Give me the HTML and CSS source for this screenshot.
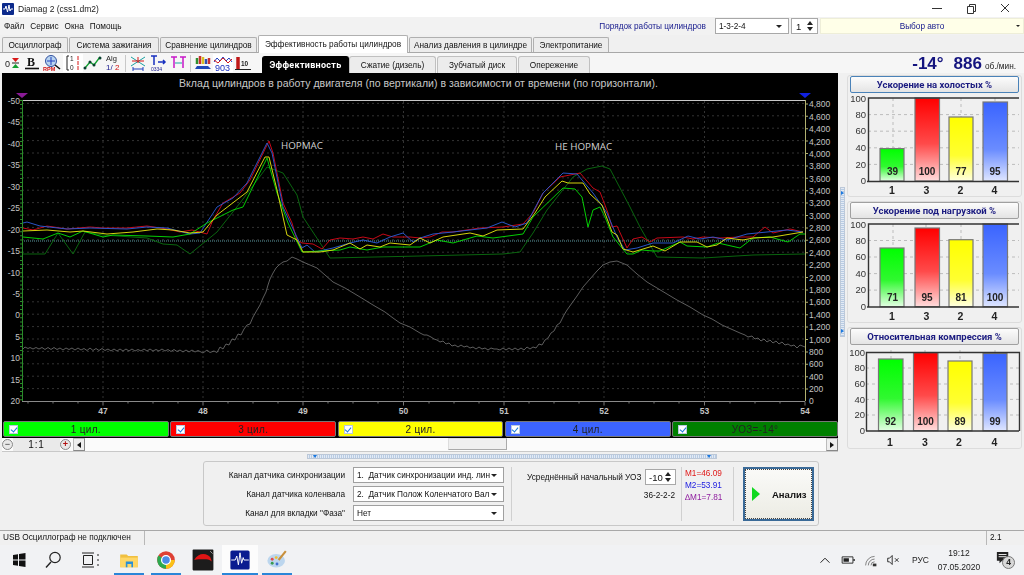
FILE: index.html
```html
<!DOCTYPE html>
<html lang="ru">
<head>
<meta charset="utf-8">
<title>Diamag 2 (css1.dm2)</title>
<link rel="stylesheet" href="styles.css">
</head>
<body>
<svg class="defs" width="0" height="0" aria-hidden="true">
  <defs>
    <linearGradient id="gGreen" x1="0" y1="0" x2="0" y2="1"><stop offset="0" stop-color="#00ff00"/><stop offset=".55" stop-color="#30f830"/><stop offset="1" stop-color="#e4ffe4"/></linearGradient>
    <linearGradient id="gRed" x1="0" y1="0" x2="0" y2="1"><stop offset="0" stop-color="#ff0000"/><stop offset=".55" stop-color="#ff4a4a"/><stop offset="1" stop-color="#ffdcdc"/></linearGradient>
    <linearGradient id="gYellow" x1="0" y1="0" x2="0" y2="1"><stop offset="0" stop-color="#ffff00"/><stop offset=".6" stop-color="#ffff30"/><stop offset="1" stop-color="#ffffe0"/></linearGradient>
    <linearGradient id="gBlue" x1="0" y1="0" x2="0" y2="1"><stop offset="0" stop-color="#3a64ff"/><stop offset=".6" stop-color="#6a8cff"/><stop offset="1" stop-color="#dfe6ff"/></linearGradient>
  </defs>
</svg>

<header class="titlebar">
  <svg class="appicon" viewBox="0 0 12 12"><rect width="12" height="12" rx="1" fill="#0c2a8c"/><path d="M1 6h2l1-3 1.500 6 1.500-7 1 6 1-2h2" fill="none" stroke="#fff" stroke-width="1"/></svg>
  <span class="title-text">Diamag 2 (css1.dm2)</span>
  <div class="winbtns">
    <svg class="winbtn" viewBox="0 0 34 17"><path d="M12 8.500h10" stroke="#333" fill="none"/></svg>
    <svg class="winbtn" viewBox="0 0 34 17"><path d="M13.500 6.500h6v7h-6zM15.500 6.500v-2h6v7h-2" stroke="#333" fill="none"/></svg>
    <svg class="winbtn" viewBox="0 0 34 17"><path d="M13 4l8 8M21 4l-8 8" stroke="#333" fill="none"/></svg>
  </div>
</header>

<nav class="menubar">
  <span class="menu-item">Файл</span><span class="menu-item">Сервис</span><span class="menu-item">Окна</span><span class="menu-item">Помощь</span>
  <span class="order-label">Порядок работы цилиндров</span>
  <span class="combo combo-order">1-3-2-4<i class="caret"></i></span>
  <span class="spin spin-top">1<i class="spin-arrows"></i></span>
  <span class="combo combo-auto"><b>Выбор авто</b><i class="caret caret-small"></i></span>
</nav>

<div class="tabs">
  <span class="tab tab-w1">Осциллограф</span>
  <span class="tab tab-w2">Система зажигания</span>
  <span class="tab tab-w3">Сравнение цилиндров</span>
  <span class="tab tab-active">Эффективность работы цилиндров</span>
  <span class="tab tab-w5">Анализ давления в цилиндре</span>
  <span class="tab tab-w6">Электропитание</span>
</div>

<div class="toolbar">
  <div class="tools">
    <div class="tgroup">
      <svg class="ti" viewBox="0 0 20 18"><text class="tt9" x="3" y="13">0</text><path fill="#d81818" d="M10 4h7l-3.500 4z"/><path fill="#222" d="M10 8.500h7v1h-7z"/><path fill="#10a030" d="M10 14h7l-3.500-4z"/></svg>
      <svg class="ti" viewBox="0 0 20 18"><text class="ttb" x="5" y="12">B</text><path class="sk2" d="M3 14.500h14"/></svg>
      <svg class="ti" viewBox="0 0 20 18"><circle class="blue-ring" cx="9" cy="7" r="5.500"/><path class="sk2" d="M13 11l5 4"/><path class="sb" d="M5 7h8M9 3v8"/><text class="tt5r" x="1" y="17">RPM</text></svg>
    </div>
    <div class="tgroup tgroup-mid">
      <svg class="ti ti-on" viewBox="0 0 20 18"><path class="sk" d="M6 2H4v14h2"/><text class="tt6" x="7" y="7">1</text><text class="tt6" x="7" y="16">0</text><path class="sr" d="M15 2v4M15 7v4M15 12v4"/></svg>
      <svg class="ti" viewBox="0 0 20 18"><path class="sg15" d="M2 14l5-6 4 3 6-8"/><circle cx="7" cy="8" r="1.500" class="dot"/><circle cx="11" cy="11" r="1.500" class="dot"/><circle cx="17" cy="4" r="1.500" class="dot"/><circle cx="2" cy="14" r="1.500" class="dot"/></svg>
      <svg class="ti" viewBox="0 0 20 18"><text class="tt7" x="3" y="7">Alg</text><text class="tt7b" x="3" y="16">1/</text><text class="tt7r" x="12" y="16">2</text></svg>
    </div>
    <i class="tsep"></i>
    <div class="tgroup tgroup-right">
      <svg class="ti" viewBox="0 0 20 18"><path class="st" d="M3 3l14 9M17 3L3 12"/><path class="sr" d="M4 7h12M10 3v6"/><path class="sb" d="M5 15h10M5 13v4M15 13v4"/></svg>
      <svg class="ti" viewBox="0 0 20 18"><path class="sb15" d="M3 2h6M6 2v9M10 8h7M15 6l2 2-2 2"/><text class="tt5k" x="3" y="17">0334</text></svg>
      <svg class="ti" viewBox="0 0 20 18"><path class="sm15" d="M3 3h6M6 3v11M12 3h6M15 3v11"/><path class="st" d="M7 9h7"/></svg>
    </div>
    <i class="tsep"></i>
    <div class="tgroup tgroup-right">
      <svg class="ti" viewBox="0 0 20 18"><path class="bar-g" d="M4 10V4"/><path class="bar-r" d="M7 10V2"/><path class="bar-y" d="M10 10V3"/><path class="bar-b" d="M13 10V5"/><path class="bar-r" d="M16 10V4"/><path class="car" d="M2 15l2-3h11l3 3z"/></svg>
      <svg class="ti ti-on" viewBox="0 0 20 18"><path class="sb" d="M1 8l3-4 3 3 3-4 3 4 3-3 3 4"/><path class="sr" d="M1 6l4 3 5-5 5 5 4-4"/><text class="tt8b" x="2" y="17">903</text></svg>
      <svg class="ti" viewBox="0 0 20 18"><path class="bar-r3" d="M5 15V3"/><path class="sk" d="M2 15.500h16"/><text class="tt7k" x="8" y="12">10</text></svg>
    </div>
  </div>
  <div class="subtabs">
    <span class="subtab subtab-active">Эффективность</span>
    <span class="subtab st-w2">Сжатие (дизель)</span>
    <span class="subtab st-w3">Зубчатый диск</span>
    <span class="subtab st-w4">Опережение</span>
  </div>
  <div class="rpm"><b>-14°</b><b class="rpm-val">886</b><small>об./мин.</small></div>
</div>

<main class="work">
  <section class="chartcol">
    <svg class="scope" viewBox="2 73 836 348">
      <text class="scope-title" x="418.500" y="86.500" text-anchor="middle">Вклад цилиндров в работу двигателя (по вертикали) в зависимости от времени (по горизонтали).</text>
      <path class="grid" d="M22 388.600H805M22 376.200H805M22 363.800H805M22 351.400H805M22 339H805M22 326.600H805M22 314.200H805M22 301.800H805M22 289.400H805M22 277H805M22 264.600H805M22 252.200H805M22 239.800H805M22 227.400H805M22 215H805M22 202.600H805M22 190.200H805M22 177.800H805M22 165.400H805M22 153H805M22 140.600H805M22 128.200H805M22 115.800H805M22 103.400H805"/>
      <path class="grid" d="M103 101V401M203 101V401M303 101V401M403.500 101V401M504 101V401M604 101V401M704.500 101V401"/>
      <path class="base" d="M22 241H805"/>
      <path class="frame-top" d="M22 100.500H805"/>
      <path class="frame-bot" d="M22 401.500H805"/>
      <path class="xminor" d="M28 401.500v2M53 401.500v2M78 401.500v2M128 401.500v2M153 401.500v2M178 401.500v2M228 401.500v2M253 401.500v2M278 401.500v2M328 401.500v2M353 401.500v2M378 401.500v2M429 401.500v2M454 401.500v2M479 401.500v2M529 401.500v2M554 401.500v2M579 401.500v2M629 401.500v2M654 401.500v2M679 401.500v2M730 401.500v2M755 401.500v2M780 401.500v2M103 401.500v4M203 401.500v4M303 401.500v4M403.500 401.500v4M504 401.500v4M604 401.500v4M704.500 401.500v4M805 401.500v4"/>
      <path class="axis-left" d="M22.500 100V401"/>
      <path class="axis-left-t" d="M21 100V401"/>
      <path class="axis-right" d="M805.500 100V401"/>
      <path class="axis-right-t" d="M807 103.400V401"/>

      <polygon class="mark-p" points="16,93 28,93 22,98"/>
      <polygon class="mark-b" points="799,93 811,93 805,98"/>

      <g class="ylab-l" text-anchor="end">
        <text x="20" y="103.500">-50</text><text x="20" y="125">-45</text><text x="20" y="146.500">-40</text><text x="20" y="168">-35</text><text x="20" y="189.500">-30</text><text x="20" y="211">-25</text><text x="20" y="232.500">-20</text><text x="20" y="254">-15</text><text x="20" y="275.500">-10</text><text x="20" y="297">-5</text><text x="20" y="318">0</text><text x="20" y="340">5</text><text x="20" y="361">10</text><text x="20" y="382.500">15</text><text x="20" y="404">20</text>
      </g>
      <g class="ylab-r">
        <text x="809" y="107">4,800</text><text x="809" y="119.500">4,600</text><text x="809" y="132">4,400</text><text x="809" y="144.500">4,200</text><text x="809" y="157">4,000</text><text x="809" y="169">3,800</text><text x="809" y="181.500">3,600</text><text x="809" y="194">3,400</text><text x="809" y="206">3,200</text><text x="809" y="218.500">3,000</text><text x="809" y="231">2,800</text><text x="809" y="243">2,600</text><text x="809" y="255.500">2,400</text><text x="809" y="268">2,200</text><text x="809" y="280.500">2,000</text><text x="809" y="293">1,800</text><text x="809" y="305">1,600</text><text x="809" y="317.500">1,400</text><text x="809" y="330">1,200</text><text x="809" y="342.500">1,000</text><text x="809" y="354.500">800</text><text x="809" y="367">600</text><text x="809" y="379.500">400</text><text x="809" y="392">200</text><text x="809" y="404">0</text>
      </g>
      <g class="xlab" text-anchor="middle">
        <text x="103" y="414">47</text><text x="203" y="414">48</text><text x="303" y="414">49</text><text x="403.500" y="414">50</text><text x="504" y="414">51</text><text x="604" y="414">52</text><text x="704.500" y="414">53</text><text x="805" y="414">54</text>
      </g>
      <text class="note" x="281" y="148.500">НОРМАС</text>
      <text class="note" x="555" y="149.500">НЕ НОРМАС</text>

      <polyline class="c-grey" points="23,349 25,347 28,348.500 30,347.500 33,349 36,347.500 39,349 42,347.500 45,349.500 48,347.500 51,349.500 54,347.500 57,349.500 60,348 63,350 66,348 69,349.500 72,348 75,350 78,348 81,350 84,348.500 87,350.500 90,348 93,350.500 96,348.500 99,350.500 102,348.500 105,350.500 108,349 111,351 114,349 117,351 120,349 123,351 126,349 129,351 132,349 135,351 138,349.500 141,351 144,349 147,351 150,349 153,351 156,349.500 159,351 162,349 165,351 168,349.500 171,351.500 174,349.500 177,351.500 180,350 183,352 186,350 189,352 192,350 195,352 198,350.500 203,353 207,350 210,352.500 214,351 217,352.500 220,347 223,349 226,344 229,345 232,339 235,340 238,334 241,335 244,329 247,325 250,324 253,317 257,310 260,305 263,298 266,292 268,285 270,279 273,273 276,268 279,265 283,262 287,261 292,257 297,259 303,262 310,265 317,268 325,275 333,282 345,288 360,297 373,305 385,312 393,318 400,323 405,325 410,327 415,330 420,333 424,335 427,335 431,337 434,339 437,340 440,342 443,341 446,344 449,343 452,346 455,345 458,347 461,345 464,347 467,346 470,348 473,347 476,349 479,347 482,349 485,348 488,350 491,348 494,349 497,349 500,350 503,348 506,350 509,348 512,350 515,348 518,350 521,348 524,350 527,347 530,349 533,347 536,348 539,344 542,345 545,340 548,338 551,333 554,331 557,325 560,323 564,315 567,310 572,303 577,296 583,287 590,279 597,271 603,265 610,262 617,261 622,263 627,265 637,274 647,282 662,291 677,300 690,307 703,315 712,319 722,325 731,329 740,333 745,335 748,337 752,336 755,339 758,338 761,341 764,339 767,342 770,340 773,343 776,341 779,344 782,342 785,345 788,344 791,346 794,345 797,348 800,345 805,347"/>
      <polyline class="c-dark" points="23,254 45,254 58,233 73,254 85,232 103,235 147,238 163,244 177,245 190,254 217,232 240,203 267,167 283,173 297,195 303,217 330,258 420,256 503,254 520,252 533,233 547,210 573,177 587,169 602,166 610,169 630,207 640,227 657,257 703,258 753,255 805,254"/>
      <polyline class="c-red" points="23,228 33,230 47,226 67,229 90,227 103,228 127,228 147,226 167,229 180,232 192,230 207,234 213,220 223,203 240,193 250,180 269,141 273,153 283,203 292,223 297,240 302,243 313,244 322,249 330,240 340,238 353,239 363,237 373,239 383,234 393,237 410,237 420,238 430,237 442,232 453,232 480,228 503,227 523,224 533,213 543,193 560,177 580,173 593,188 600,192 608,213 612,227 617,226 627,248 633,239 642,237 650,242 657,238 683,237 693,239 703,237 720,238 740,237 753,237 765,227 773,233 790,229 803,232"/>
      <polyline class="c-blue" points="23,223 27,222 40,226 67,229 90,228 127,229 147,227 167,228 190,234 200,233 217,207 233,198 247,183 267,143 272,153 283,207 295,233 302,248 307,245 315,252 333,248 350,243 363,240 377,243 390,237 403,233 413,242 420,238 433,234 453,232 487,228 502,222 515,227 527,223 543,193 563,173 577,174 593,193 607,213 617,237 625,250 637,248 653,243 673,243 688,236 700,239 713,237 727,240 747,234 767,232 787,230 803,232"/>
      <polyline class="c-green" points="23,237 43,239 58,233 70,237 83,231 103,237 113,235 147,236 173,237 190,234 207,223 233,210 243,207 267,158 277,193 288,223 302,252 320,251 340,250 350,247 367,250 383,247 400,247 420,247 437,240 453,243 477,236 493,238 523,234 533,217 563,188 575,189 582,197 588,227 593,210 600,207 605,217 613,237 627,254 633,254 642,250 653,251 660,251 680,242 687,246 707,247 718,243 740,248 753,238 770,237 788,242 800,234 805,234"/>
      <polyline class="c-yellow" points="23,231 47,230 70,232 83,231 107,234 133,232 157,229 173,230 190,233 203,232 217,215 247,192 265,157 269,157 277,190 287,235 297,240 303,252 320,252 333,250 350,243 360,249 367,245 380,247 390,243 410,245 420,238 430,243 443,237 470,233 483,236 497,230 523,229 535,213 545,197 562,181 568,183 583,183 590,194 602,205 612,232 617,235 623,249 633,252 653,246 665,251 680,242 697,242 707,247 717,245 727,238 743,240 753,238 773,237 803,232"/>
    </svg>

    <div class="legend">
      <label class="leg leg-green"><i class="chk"></i><span>1 цил.</span></label>
      <label class="leg leg-red"><i class="chk"></i><span>3 цил.</span></label>
      <label class="leg leg-yellow"><i class="chk"></i><span>2 цил.</span></label>
      <label class="leg leg-blue"><i class="chk"></i><span>4 цил.</span></label>
      <label class="leg leg-dark"><i class="chk"></i><span>УОЗ=-14°</span></label>
    </div>

    <div class="scrollstrip">
      <i class="round">−</i>
      <span class="zoomval">1:1</span>
      <i class="round round-plus">+</i>
      <i class="sbtn"><i class="arr-l"></i></i>
      <div class="track"><i class="thumb"></i></div>
      <i class="sbtn"><i class="arr-r"></i></i>
    </div>
  </section>

  <div class="rail"><div class="vsplit"><i class="blue-tip"></i><i class="blue-tip"></i></div></div>

  <aside class="side">
    <section class="group">
      <h3 class="gbtn gbtn-focus">Ускорение на холостых %</h3>
      <svg class="bars" viewBox="848 93 172 103">
        <path class="bgrid" d="M867 114.600H1018M867 131.200H1018M867 147.800H1018M867 164.400H1018M892 98V181M925 98V181M960 98V181M994 98V181"/>
        <rect class="bar" x="879" y="148.600" width="24" height="32.400" fill="url(#gGreen)"/>
        <rect class="bar" x="914" y="98" width="24.500" height="83" fill="url(#gRed)"/>
        <rect class="bar" x="948" y="117" width="24" height="64" fill="url(#gYellow)"/>
        <rect class="bar" x="982" y="102" width="24.500" height="79" fill="url(#gBlue)"/>
        <path class="paxis" d="M867.500 181V98H1018M866 181.500H1018"/>
        <g class="vals" text-anchor="middle"><text x="891.500" y="175">39</text><text x="926" y="175">100</text><text x="960" y="175">77</text><text x="994" y="175">95</text></g>
        <g class="ylabs" text-anchor="end"><text x="865" y="101.500">100</text><text x="865" y="118">80</text><text x="865" y="134">60</text><text x="865" y="151">40</text><text x="865" y="167.500">20</text><text x="865" y="184">0</text></g>
        <g class="cats" text-anchor="middle"><text x="891" y="194">1</text><text x="925.500" y="194">3</text><text x="959.500" y="194">2</text><text x="993.500" y="194">4</text></g>
      </svg>
    </section>
    <section class="group">
      <h3 class="gbtn">Ускорение под нагрузкой %</h3>
      <svg class="bars" viewBox="848 219 172 103">
        <path class="bgrid" d="M867 240.500H1018M867 257H1018M867 273.600H1018M867 290.100H1018M892 224V306.700M925 224V306.700M960 224V306.700M994 224V306.700"/>
        <rect class="bar" x="879" y="248" width="24" height="58.700" fill="url(#gGreen)"/>
        <rect class="bar" x="914" y="228" width="24.500" height="78.700" fill="url(#gRed)"/>
        <rect class="bar" x="948" y="239.700" width="24" height="67" fill="url(#gYellow)"/>
        <rect class="bar" x="982" y="224" width="24.500" height="82.700" fill="url(#gBlue)"/>
        <path class="paxis" d="M867.500 306.700V224H1018M866 307H1018"/>
        <g class="vals" text-anchor="middle"><text x="891.500" y="300.500">71</text><text x="926" y="300.500">95</text><text x="960" y="300.500">81</text><text x="994" y="300.500">100</text></g>
        <g class="ylabs" text-anchor="end"><text x="865" y="227.500">100</text><text x="865" y="243.500">80</text><text x="865" y="260">60</text><text x="865" y="276.500">40</text><text x="865" y="293">20</text><text x="865" y="309.500">0</text></g>
        <g class="cats" text-anchor="middle"><text x="891" y="319.500">1</text><text x="925.500" y="319.500">3</text><text x="959.500" y="319.500">2</text><text x="993.500" y="319.500">4</text></g>
      </svg>
    </section>
    <section class="group">
      <h3 class="gbtn">Относительная компрессия %</h3>
      <svg class="bars" viewBox="848 345 172 103">
        <path class="bgrid" d="M865 368H1018M865 384H1018M865 399.400H1018M865 415H1018M890 350V431M924 350V431M959 350V431M994 350V431"/>
        <rect class="bar" x="877.500" y="359" width="24.500" height="71.700" fill="url(#gGreen)"/>
        <rect class="bar" x="912.500" y="352.600" width="24.500" height="78" fill="url(#gRed)"/>
        <rect class="bar" x="947" y="361" width="24" height="69.700" fill="url(#gYellow)"/>
        <rect class="bar" x="982" y="353.500" width="24" height="77.200" fill="url(#gBlue)"/>
        <path class="paxis" d="M865.500 431V352.500H1018.500V431M865 431H1018"/>
        <g class="vals" text-anchor="middle"><text x="889.500" y="425">92</text><text x="924.500" y="425">100</text><text x="959" y="425">89</text><text x="994" y="425">99</text></g>
        <g class="ylabs" text-anchor="end"><text x="864" y="356">100</text><text x="864" y="371">80</text><text x="864" y="387">60</text><text x="864" y="402.500">40</text><text x="864" y="418">20</text><text x="864" y="434">0</text></g>
        <g class="cats" text-anchor="middle"><text x="889" y="445.500">1</text><text x="924" y="445.500">3</text><text x="958" y="445.500">2</text><text x="993.500" y="445.500">4</text></g>
      </svg>
    </section>
  </aside>
</main>

<div class="hsplit"><div class="hsplit-bar"><i class="blue-tip-d"></i><i class="blue-tip-d"></i></div></div>

<section class="panel">
  <div class="form">
    <div class="frow"><label>Канал датчика синхронизации</label><span class="combo combo-f">1.&nbsp; Датчик синхронизации инд. лин<i class="caret"></i></span></div>
    <div class="frow"><label>Канал датчика коленвала</label><span class="combo combo-f">2.&nbsp; Датчик Полож Коленчатого Вал<i class="caret"></i></span></div>
    <div class="frow"><label>Канал для вкладки "Фаза"</label><span class="combo combo-f">Нет<i class="caret"></i></span></div>
  </div>
  <i class="psep psep-a"></i>
  <div class="uoz">
    <div class="uoz-row"><span>Усреднённый начальный УОЗ</span><span class="spin spin-uoz">-10<i class="spin-arrows"></i></span></div>
    <div class="gear">36-2-2-2</div>
  </div>
  <i class="psep psep-b"></i>
  <div class="moments"><span class="m1">M1=46.09</span><span class="m2">M2=53.91</span><span class="m3">∆M1=7.81</span></div>
  <i class="psep psep-c"></i>
  <button class="run" type="button"><i class="play"></i><b>Анализ</b></button>
</section>

<div class="spacer"></div>

<footer class="statusbar">
  <span class="st-main">USB Осциллограф не подключен</span>
  <span class="st-fill"></span>
  <span class="st-ver">2.1</span>
</footer>

<div class="taskbar">
  <svg class="tk tk-start" viewBox="0 0 35 30"><path fill="#111" d="M12 10l5-.7v5.200h-5zM18 9.100l6.500-1v6.400H18zM12 15.500h5v5.200l-5-.7zM18 15.500h6.500v6.400l-6.500-1z"/></svg>
  <svg class="tk" viewBox="0 0 35 30"><circle cx="19" cy="12.500" r="5.200" fill="none" stroke="#222" stroke-width="1.200"/><path d="M15 17l-5 5.500" stroke="#222" stroke-width="1.400"/></svg>
  <svg class="tk" viewBox="0 0 35 30"><path d="M12.500 10.500h9v9h-9zM11 8h12M11 22h12M26 10h2M26 15h2M26 20h2" fill="none" stroke="#222"/></svg>
  <div class="tk-app tk-first"><svg viewBox="0 0 30 30"><path fill="#f0c040" d="M4 8h8l2 2h12v14H4z"/><path fill="#ffd766" d="M4 12h22v12H4z"/><path fill="#2a90d8" d="M11 17h9v7h-2v-4h-5v4h-2z"/></svg></div>
  <div class="tk-app"><svg viewBox="0 0 30 30"><circle cx="15" cy="15" r="11" fill="#de4034"/><path fill="#fbc116" d="M15 15l11 0a11 11 0 0 1-11 11z"/><path fill="#2ca94f" d="M15 26A11 11 0 0 1 5.500 9.500L15 15z"/><circle cx="15" cy="15" r="5.500" fill="#4a8be8" stroke="#fff" stroke-width="1.600"/></svg></div>
  <div class="tk-app tk-plain"><svg viewBox="0 0 30 30"><rect x="2" y="2" width="26" height="26" rx="1" fill="#1c1c1c"/><path fill="#e01515" d="M4 15c4-7 11-9 17-6 3 1 4 4 5 8-3-3-6-3-10-3-4 0-8 0-12 1z"/><path d="M24 4l3 3" stroke="#bbb"/></svg></div>
  <div class="tk-app tk-active"><svg viewBox="0 0 30 30"><rect x="3" y="3" width="24" height="24" rx="2" fill="#0a1c90"/><path d="M4 15h5l2-5 2 11 2-15 2 13 2-7 1 3h6" fill="none" stroke="#fff" stroke-width="1.200"/></svg></div>
  <div class="tk-app"><svg viewBox="0 0 30 30"><ellipse cx="14" cy="16" rx="11" ry="8.500" fill="#bcd6ee"/><circle cx="9" cy="14" r="1.800" fill="#e24c4c"/><circle cx="14" cy="12" r="1.800" fill="#f0c030"/><circle cx="9" cy="19" r="1.800" fill="#3a9a50"/><circle cx="15" cy="20" r="1.800" fill="#4070d0"/><path d="M17 15L26 4" stroke="#c8903c" stroke-width="2.600"/></svg></div>
  <div class="tray">
    <svg class="ty" viewBox="0 0 20 16"><path d="M5 11l5-5 5 5" fill="none" stroke="#222" stroke-width="1.100"/></svg>
    <svg class="ty" viewBox="0 0 20 16"><path d="M3.500 4.500h12v7h-12z" fill="none" stroke="#222"/><path d="M5 6h6v4H5zM16 7h1.500v2H16z" fill="#222"/></svg>
    <svg class="ty" viewBox="0 0 20 16"><path d="M4 14a10 10 0 0 1 10-10M7 14a7 7 0 0 1 7-7M10 14a4 4 0 0 1 4-4" fill="none" stroke="#777"/><path d="M12 12h4v3h-4z" fill="#333"/></svg>
    <svg class="ty" viewBox="0 0 20 16"><path d="M3 6h2l3-3v10l-3-3H3z" fill="none" stroke="#222"/><path d="M11 6l4 4M15 6l-4 4" stroke="#222" fill="none"/></svg>
    <span class="lang">РУС</span>
    <span class="clock"><span>19:12</span><span>07.05.2020</span></span>
    <span class="notif"><svg viewBox="0 0 16 16"><path d="M1 1h13v10H7l-3 3v-3H1z" fill="#222"/><path d="M3 4h9M3 6.500h9" stroke="#fff"/></svg><i class="notif-n">4</i></span>
  </div>
</div>
</body>
</html>
```
FILE: styles.css
```css
* { box-sizing: border-box; }
html, body { margin: 0; padding: 0; }
body {
  width: 1024px; height: 575px; overflow: hidden;
  display: flex; flex-direction: column;
  background: #f0f0f0; color: #111;
  font: 8.250px "Liberation Sans", Arial, sans-serif;
}
body > * { filter: blur(.3px); }
i { font-style: normal; display: block; }
.defs { position: absolute; }

/* title bar */
.titlebar { height: 17px; flex: none; background: #fff; display: flex; align-items: center; padding: 0 2px; }
.appicon { width: 12px; height: 12px; }
.title-text { margin-left: 4px; font-size: 8.500px; color: #222; }
.winbtns { margin-left: auto; display: flex; }
.winbtn { width: 34px; height: 17px; }

/* menu */
.menubar { height: 18px; flex: none; display: flex; align-items: center; padding-left: 4px; background: #f2f2f2; }
.menu-item { margin-right: 6px; color: #111; }
.order-label { margin-left: auto; color: #14188c; margin-right: 9px; }
.combo { position: relative; display: flex; align-items: center; background: #fff; border: 1px solid #a8a8a8; padding: 0 14px 0 3px; height: 16px; color: #111; white-space: nowrap; overflow: hidden; }
.caret { position: absolute; right: 6px; top: 50%; margin-top: -1px; width: 0; height: 0; border-style: solid; border-color: #222 transparent transparent; border-width: 3px 3.500px 0; }
.caret-small { border-width: 2.500px 2.500px 0; right: 3px; }
.combo-order { width: 74px; margin-right: 2px; }
.spin { position: relative; display: flex; align-items: center; background: #fff; border: 1px solid #a8a8a8; height: 16px; padding-left: 4px; color: #111; white-space: nowrap; }
.spin-top { width: 27px; margin-right: 2px; font-size: 9.500px; }
.spin-arrows { position: absolute; right: 3px; top: 2px; width: 7px; height: 10px; }
.spin-arrows::before, .spin-arrows::after { content: ""; position: absolute; left: 0; width: 0; height: 0; border-style: solid; border-color: transparent; }
.spin-arrows::before { top: 0; border-width: 0 3.500px 4px; border-bottom-color: #222; }
.spin-arrows::after { bottom: 0; border-width: 4px 3.500px 0; border-top-color: #222; }
.combo-auto { width: 204px; background: #ffffe8; border-color: #eeeed8; justify-content: center; padding: 0; }
.combo-auto b { font-weight: normal; color: #14188c; }

/* tabs */
.tabs { height: 18px; flex: none; display: flex; align-items: flex-end; padding-left: 2px; border-bottom: 1px solid #a8a8a8; background: #f0f0f0; }
.tab { height: 15px; margin-right: 1px; display: flex; align-items: center; justify-content: center; white-space: nowrap; background: #ececec; border: 1px solid #b0b0b0; border-bottom: 0; border-radius: 2px 2px 0 0; color: #111; }
.tab-w1 { width: 66px; }
.tab-w2 { width: 90px; }
.tab-w3 { width: 97px; }
.tab-active { width: 150px; height: 18px; background: #fff; margin-bottom: -1px; }
.tab-w5 { width: 123px; }
.tab-w6 { width: 76px; }

/* toolbar */
.toolbar { height: 20px; flex: none; display: flex; align-items: flex-end; background: #f6f6f6; }
.tools { width: 262px; height: 20px; flex: none; display: flex; align-items: center; padding-left: 2px; }
.tgroup { display: flex; }
.tgroup-mid { margin-left: 1px; }
.tgroup-right { margin-left: 2px; }
.tsep { width: 1px; height: 17px; background: #c8c8c8; margin-left: 2px; }
.ti { width: 20px; height: 18px; display: block; }
.ti-on { background: #fff; }
.tt9 { font-size: 9px; fill: #222; }
.ttb { font: bold 12px "Liberation Serif", serif; fill: #111; }
.tt5r { font-size: 5.500px; font-weight: bold; fill: #d01010; }
.tt6 { font-size: 6.500px; fill: #222; }
.tt7 { font-size: 7.500px; fill: #222; }
.tt7b { font-size: 8px; fill: #1a1a90; }
.tt7r { font-size: 8px; fill: #d01010; }
.tt7k { font-size: 6.500px; font-weight: bold; fill: #222; }
.tt5k { font-size: 5px; fill: #1a1a90; }
.tt8b { font-size: 9px; fill: #1a30c0; }
.sr, .sk, .sg, .sb, .st, .sk2, .sg15, .sb15, .sm15 { fill: none; }
.sr { stroke: #d81818; }
.sk { stroke: #222; }
.sk2 { stroke: #111; stroke-width: 1.600; }
.sg { stroke: #10a030; }
.sb { stroke: #2040c0; }
.st { stroke: #18a0a0; }
.sg15 { stroke: #10a030; stroke-width: 1.300; }
.sb15 { stroke: #1830c0; stroke-width: 1.500; }
.sm15 { stroke: #c818c8; stroke-width: 1.500; }
.dot { fill: #0a4030; }
.blue-ring { fill: #b8d4f0; stroke: #3050a0; }
.bar-g, .bar-r, .bar-y, .bar-b, .bar-r3 { fill: none; stroke-width: 2.500; }
.bar-g { stroke: #309030; }
.bar-r { stroke: #c83030; }
.bar-y { stroke: #d8c020; }
.bar-b { stroke: #3050b0; }
.bar-r3 { stroke: #c01818; stroke-width: 3.500; }
.car { fill: #2048b8; }

.subtabs { display: flex; align-items: flex-end; }
.subtab { height: 17px; display: flex; align-items: center; justify-content: center; white-space: nowrap; background: #ececec; border: 1px solid #c0c0c0; border-bottom: 0; border-radius: 3px 3px 0 0; color: #111; }
.subtab-active { width: 87px; background: #000; color: #fff; font: bold 9px Roboto, sans-serif; border-color: #000; letter-spacing: .3px; }
.st-w2 { width: 87px; margin-right: 1px; }
.st-w3 { width: 80px; margin-right: 1px; }
.st-w4 { width: 72px; }
.rpm { margin-left: auto; display: flex; align-items: baseline; padding-right: 8px; color: #14147f; font: 17px/19px "Liberation Sans", Arial, sans-serif; }
.rpm-val { margin-left: 10px; }
.rpm small { font: 8.250px "Liberation Sans", sans-serif; color: #222; margin-left: 3px; }

/* main area */
.work { height: 378px; flex: none; display: flex; }
.chartcol { width: 836px; margin-left: 2px; flex: none; background: #000; display: flex; flex-direction: column; }
.scope { width: 836px; height: 348px; display: block; flex: none; background: #000; font-family: "Liberation Sans", Arial, sans-serif; }
.scope-title { font-size: 10.500px; fill: #c8c8c8; letter-spacing: .03px; }
.grid { stroke: #333; stroke-width: 1; stroke-dasharray: 2 3; fill: none; }
.base { stroke: #5a98a0; stroke-width: 1; stroke-dasharray: 1 1; fill: none; }
.frame-top { stroke: #c8c8c8; fill: none; }
.frame-bot { stroke: #8a8a8a; fill: none; }
.xminor { stroke: #777; fill: none; }
.axis-left { stroke: #2a8a2a; fill: none; }
.axis-left-t { stroke: #2a8a2a; stroke-width: 2; stroke-dasharray: 1 3.100; fill: none; }
.axis-right { stroke: #b0b070; fill: none; }
.axis-right-t { stroke: #b0b070; stroke-width: 2; stroke-dasharray: 1 11.400; fill: none; }
.mark-p { fill: #8a1a96; }
.mark-b { fill: #1020e0; }
.ylab-l text, .ylab-r text { font-size: 8.500px; fill: #c4c4c4; }
.xlab text { font-size: 8.500px; font-weight: bold; fill: #c4c4c4; }
.note { font: 9.800px "Open Sans", sans-serif; fill: #d0d0d0; }
.c-grey, .c-dark, .c-red, .c-blue, .c-green, .c-yellow { fill: none; stroke-width: .950; stroke-linejoin: round; }
.c-grey { stroke: #686868; stroke-width: .900; }
.c-dark { stroke: #0b6a10; }
.c-red { stroke: #d00818; }
.c-blue { stroke: #2a58d0; }
.c-green { stroke: #04d804; }
.c-yellow { stroke: #dede10; }

/* legend */
.legend { height: 16px; flex: none; display: flex; gap: 1.500px; padding-left: 1px; }
.leg { flex: 1; display: flex; align-items: center; border-radius: 2px; border: 1px solid #777; padding-left: 5px; font: 10px "Liberation Sans", Arial, sans-serif; }
.leg span { flex: 1; text-align: center; color: #222; padding-right: 14px; letter-spacing: .3px; }
.chk { width: 9px; height: 9px; flex: none; background: #fff; border: 1px solid #b8c8e0; position: relative; }
.chk::after { content: ""; position: absolute; left: 1.500px; top: 0; width: 3px; height: 5px; border: solid #1878d8; border-width: 0 1.500px 1.500px 0; transform: rotate(40deg); }
.leg-green { background: #00ff00; }
.leg-red { background: #ff0000; }
.leg-yellow { background: #ffff00; }
.leg-blue { background: #3c64ff; }
.leg-dark { background: #008000; }

/* strip */
.scrollstrip { flex: 1; margin-top: 1px; display: flex; align-items: stretch; background: #fbfbfb; border-bottom: 1px solid #c8c8c8; }
.round { width: 11px; flex: none; display: flex; align-items: center; justify-content: center; font-size: 9px; line-height: 1; background: #e8e8e8; border: 1px solid #888; border-radius: 6px; color: #222; height: 11px; margin-top: 1px; }
.round-plus { color: #b01010; font-weight: bold; }
.zoomval { width: 47px; text-align: center; font: 10px/13px "Liberation Sans", Arial, sans-serif; background: #eaeaea; letter-spacing: .8px; }
.sbtn { width: 12px; flex: none; margin-left: 2px; background: #eee; border: 1px solid #bbb; border-bottom-color: #888; border-right-color: #888; display: flex; align-items: center; justify-content: center; }
.arr-l { border: 3px solid transparent; border-right: 4px solid #111; border-left: 0; }
.arr-r { border: 3px solid transparent; border-left: 4px solid #111; border-right: 0; }
.track { flex: 1; position: relative; }
.thumb { position: absolute; left: 363px; top: 0; width: 59px; height: 12px; background: #f0f0f0; border: 1px solid #ddd; border-right-color: #aaa; border-bottom-color: #aaa; }

/* rail */
.rail { width: 9px; flex: none; display: flex; align-items: flex-start; justify-content: center; padding-top: 114px; }
.vsplit { width: 5px; height: 150px; background: repeating-linear-gradient(#e3eaf4 0 1px, #b8cce4 1px 2px); border: 1px solid #bcc8d8; display: flex; flex-direction: column; justify-content: space-between; padding: 3px 0; }
.blue-tip { width: 0; height: 0; border: 2.500px solid transparent; border-left: 3px solid #1a78e0; border-right: 0; }

/* side */
.side { width: 175px; flex: none; display: flex; flex-direction: column; gap: 4px; padding-top: 2px; }
.group { height: 122px; display: flex; flex-direction: column; border: 1px solid #dcdcdc; border-radius: 3px; padding: 0 1px; }
.gbtn { margin: 0 1px; height: 17px; flex: none; display: flex; align-items: center; justify-content: center; background: linear-gradient(#fcfcfc, #e4e4e4); border: 1px solid #a0a0a0; border-radius: 2px; font: 700 9.500px Roboto, sans-serif; color: #1a1a80; white-space: nowrap; }
.gbtn-focus { border-color: #4a82b8; }
.bars { width: 172px; height: 103px; display: block; flex: none; font-family: "Liberation Sans", Arial, sans-serif; }
.bgrid { stroke: #bcbcbc; stroke-dasharray: 3 3; fill: none; }
.bar { stroke: #777; stroke-width: 1.200; }
.paxis { stroke: #333; stroke-width: 1.400; fill: none; }
.vals text { font-size: 10px; font-weight: bold; fill: #222; }
.ylabs text { font-size: 9.500px; fill: #333; }
.cats text { font-size: 10.500px; font-weight: bold; fill: #222; }

/* splitter */
.hsplit { height: 10px; flex: none; padding: 3px 0 0 307px; }
.hsplit-bar { width: 410px; height: 5px; background: repeating-linear-gradient(90deg, #e3eaf4 0 1px, #b8cce4 1px 2px); border: 1px solid #bcc8d8; display: flex; justify-content: space-between; padding: 0 5px; }
.blue-tip-d { width: 0; height: 0; border: 2.500px solid transparent; border-top: 3px solid #1a78e0; border-bottom: 0; }

/* panel */
.panel { margin-left: 203px; width: 616px; height: 65px; flex: none; display: flex; border: 1px solid #c8c8c8; border-radius: 3px; background: #f0f0f0; padding: 5px 0 4px; }
.form { width: 301px; flex: none; display: flex; flex-direction: column; gap: 3px; }
.frow { display: flex; align-items: center; height: 16px; }
.frow label { width: 141px; text-align: right; color: #111; white-space: nowrap; }
.combo-f { margin-left: 8px; width: 151px; border-color: #a0a0a0; padding-right: 10px; }
.psep { width: 1px; flex: none; background: #d0d0d0; }
.psep-a { margin-left: 6px; }
.uoz { width: 169px; flex: none; padding: 2px 5px 0 15px; }
.uoz-row { display: flex; align-items: center; justify-content: space-between; color: #111; white-space: nowrap; }
.spin-uoz { width: 31px; font-size: 9.500px; padding-left: 3px; }
.gear { text-align: right; margin-top: 6px; color: #111; padding-right: 1px; }
.moments { width: 51px; flex: none; padding: 1px 0 0 3px; display: flex; flex-direction: column; gap: 1px; line-height: 11px; }
.m1 { color: #e01818; }
.m2 { color: #2020e0; }
.m3 { color: #9020a0; }
.run { margin-left: 9px; width: 71px; height: 54px; flex: none; display: flex; align-items: center; padding: 0 0 0 7px; background: linear-gradient(#fafaf8, #ecece4); border: 2px solid #3a6a98; outline: 1px dotted #444; outline-offset: -3px; font: inherit; color: #111; }
.play { width: 0; height: 0; border: 7px solid transparent; border-left: 8px solid #10d820; border-right: 0; }
.run b { margin-left: 12px; font-size: 9.500px; }

.spacer { flex: 1; }

/* status */
.statusbar { height: 15px; flex: none; display: flex; background: #f0f0f0; border-top: 1px solid #a8a8a8; line-height: 14px; color: #111; }
.st-main { width: 145px; padding-left: 3px; border-right: 1px solid #b8b8b8; white-space: nowrap; }
.st-fill { flex: 1; border-right: 1px solid #b8b8b8; }
.st-ver { width: 37px; padding-left: 3px; }

/* taskbar */
.taskbar { height: 30px; flex: none; display: flex; align-items: center; background: #f1f2f4; }
.tk { width: 35px; height: 30px; flex: none; display: block; }
.tk-start { margin-left: 1px; }
.tk-app { width: 36px; height: 30px; flex: none; margin-right: 1px; padding: 3px; border-bottom: 2px solid transparent; position: relative; display: flex; justify-content: center; }
.tk-app svg { width: 24px; height: 24px; display: block; }
.tk-app::after { content: ""; position: absolute; left: 3px; right: 3px; bottom: -2px; height: 2px; background: #2a86d8; }
.tk-first { margin-left: 5px; }
.tk-plain::after { display: none; }
.tk-active { background: #fcfcfc; }
.tk-active::after { left: 0; right: 0; }
.tray { margin-left: auto; display: flex; align-items: center; height: 30px; color: #222; }
.ty { width: 18px; height: 16px; margin-right: 5px; display: block; }
.lang { font-size: 8.500px; margin: 0 8px 0 4px; }
.clock { display: flex; flex-direction: column; align-items: center; font-size: 8.500px; line-height: 14px; width: 44px; margin-right: 13px; }
.notif { width: 30px; height: 24px; position: relative; display: block; }
.notif svg { width: 14px; height: 14px; position: absolute; left: 2px; top: 3px; display: block; }
.notif-n { position: absolute; left: 8px; top: 8px; width: 13px; height: 13px; border-radius: 50%; background: #d8d8d8; border: 1px solid #777; font-size: 8.500px; text-align: center; line-height: 11px; font-weight: bold; }
```
